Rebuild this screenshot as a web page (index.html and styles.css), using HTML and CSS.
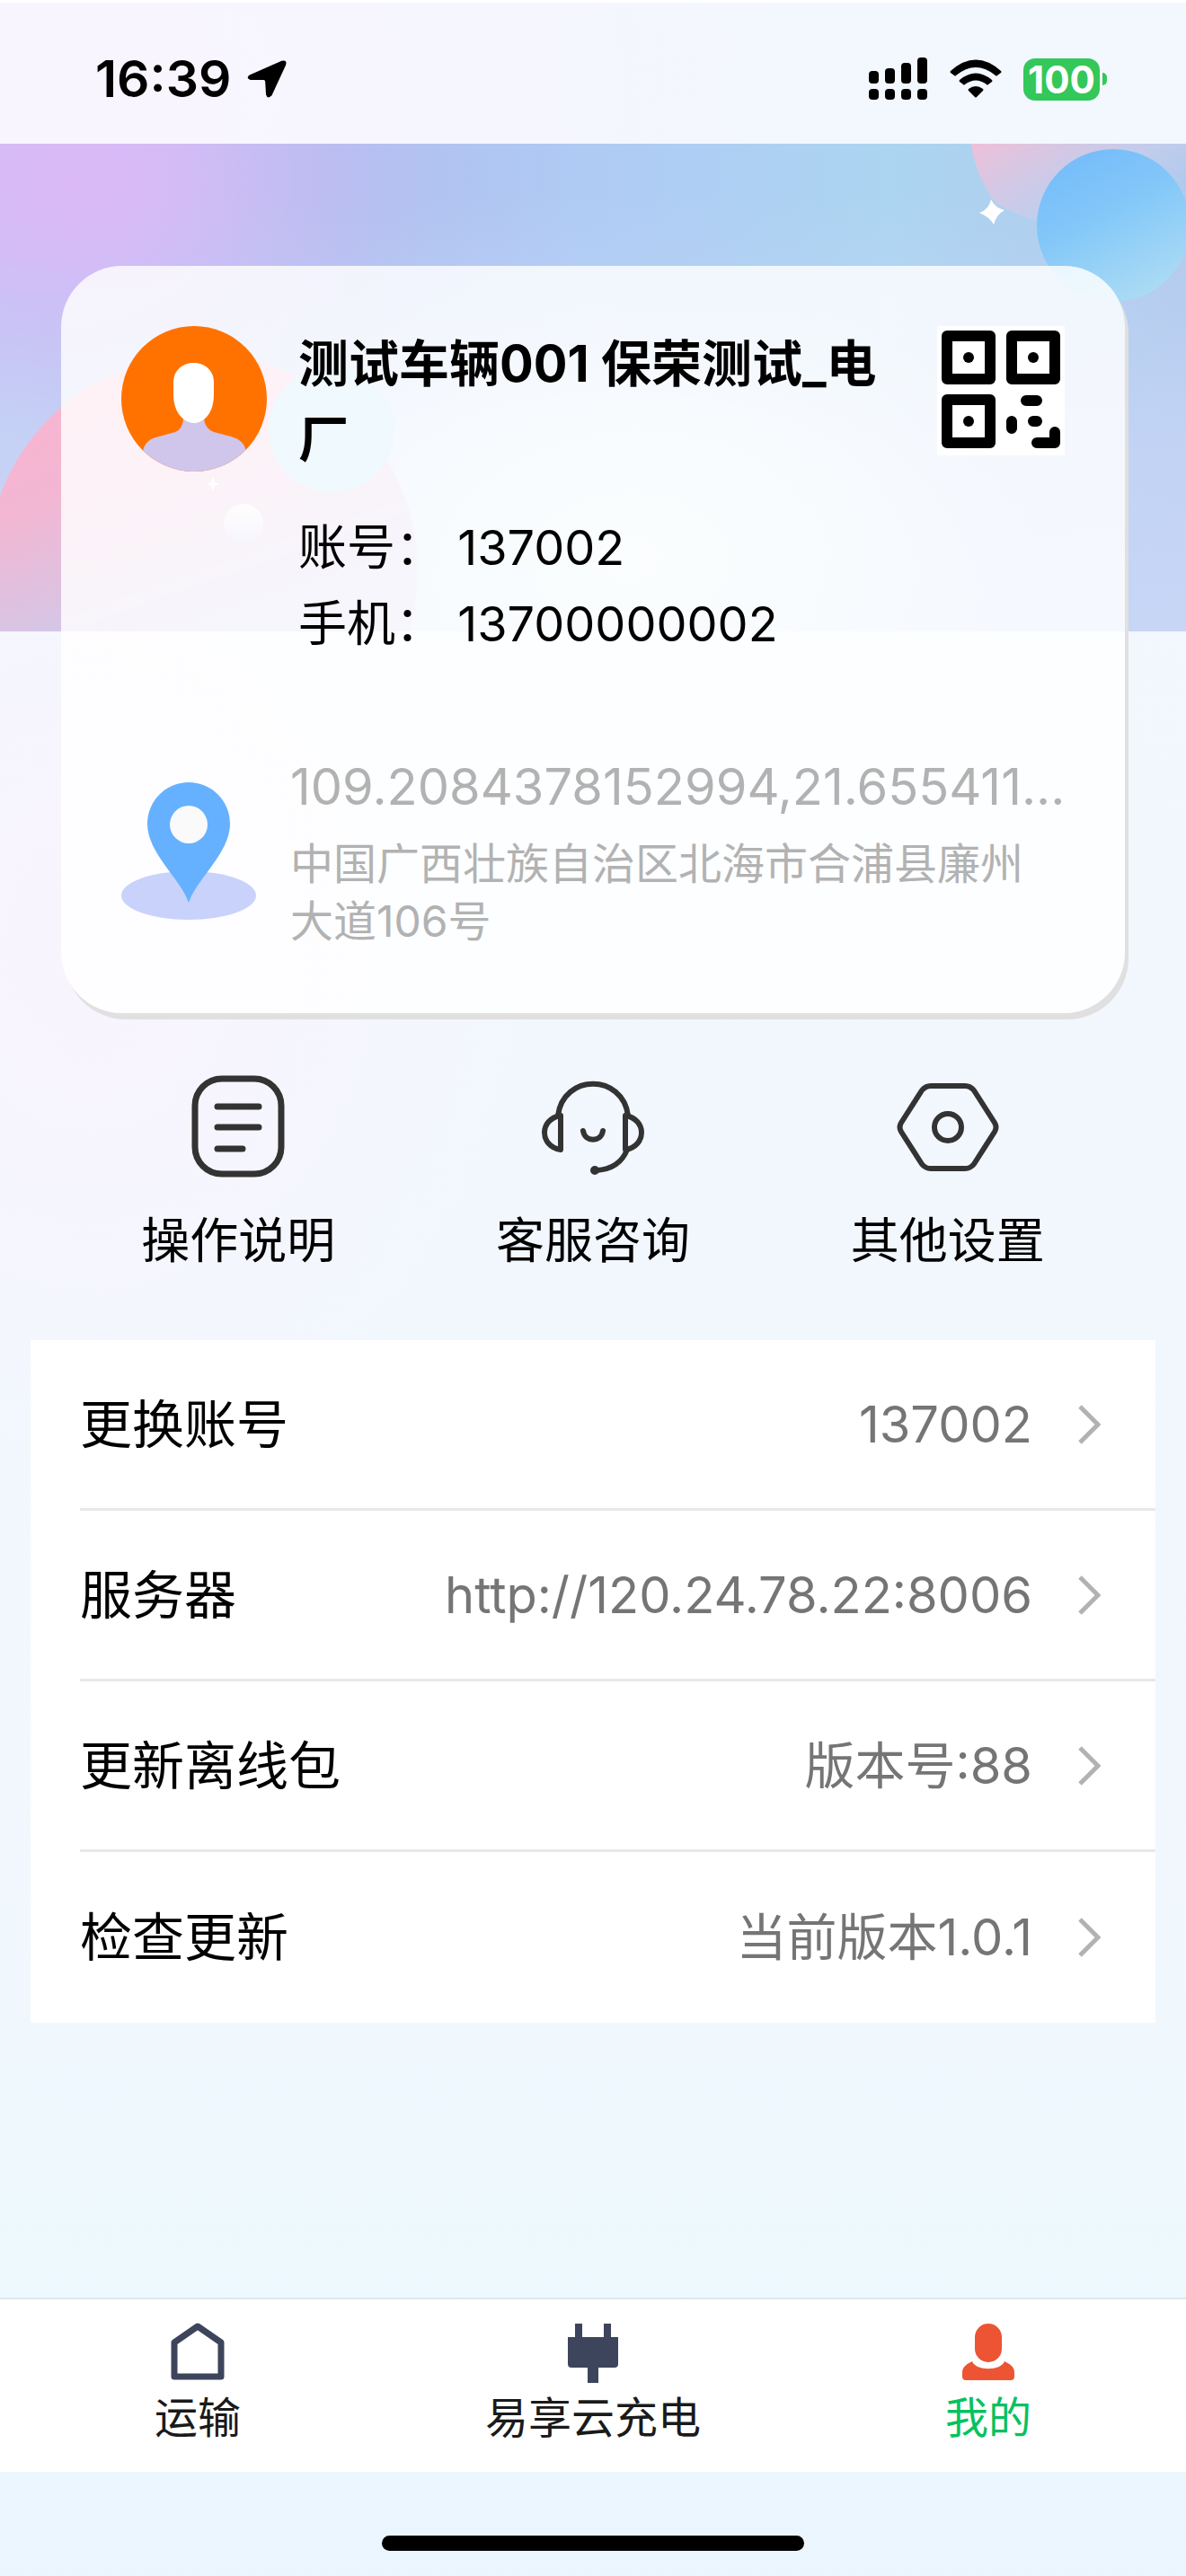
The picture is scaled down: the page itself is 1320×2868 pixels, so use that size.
FILE: index.html
```
<!DOCTYPE html>
<html lang="zh-CN">
<head>
<meta charset="utf-8"/>
<meta name="viewport" content="width=device-width, initial-scale=1"/>
<title>我的</title>
<link rel="stylesheet" href="styles.css">
</head>
<body>
<header class="status-bar">
<div class="status-left">
<span class="time">16:39</span>
<svg width="44" height="44" viewBox="0 0 48 46"><path d="M42 1 L3 18 Q-2 22 4 24 L20 24 Q22 24 22 26 L23 42 Q25 48 30 43 L47 6 Q49 -1 42 1Z"/></svg>
</div>
<div class="status-right">
<svg width="66" height="48" viewBox="0 0 66 48"><rect x="0" y="15" width="11" height="14" rx="4"/><rect x="18" y="12" width="11" height="17" rx="4"/><rect x="36" y="6" width="11" height="23" rx="4"/><rect x="54" y="0" width="11" height="29" rx="4"/><rect x="0" y="35" width="11" height="12" rx="4"/><rect x="18" y="35" width="11" height="12" rx="4"/><rect x="36" y="35" width="11" height="12" rx="4"/><rect x="54" y="35" width="11" height="12" rx="4"/></svg>
<svg width="58" height="44" viewBox="0 0 58 44"><path d="M1 13 Q29 -12 57 13 Q58 14 57 15 L53 18 Q52 19 51 18 Q29 0 7 18 Q6 19 5 18 L1 15 Q0 14 1 13Z"/><path d="M11 23 Q29 8 47 23 Q48 24 47 25 L43 28 Q42 29 41 28 Q29 19 17 28 Q16 29 15 28 L11 25 Q10 24 11 23Z"/><path d="M21 33 Q29 27 37 33 Q38 34 37 35 L30 42 Q29 43 28 42 L21 35 Q20 34 21 33Z"/></svg>
<div class="battery"><span class="battery-level">100</span><span class="battery-cap"></span></div>
</div>
</header>

<main>
<section class="profile">
<svg class="banner" viewBox="0 0 1320 543" preserveAspectRatio="none" aria-hidden="true">
<defs>
<linearGradient id="sky" x1="0" y1="0" x2="1" y2="0"><stop offset="0" stop-color="#c3c6f4"/><stop offset=".28" stop-color="#b3bef0"/><stop offset=".48" stop-color="#afcaf4"/><stop offset=".75" stop-color="#acd5f1"/><stop offset="1" stop-color="#b0c9ec"/></linearGradient>
<linearGradient id="haze" x1="0" y1="0" x2="0" y2="1"><stop offset=".1" stop-color="#c0d5f6" stop-opacity="0"/><stop offset=".6" stop-color="#c6d5f6" stop-opacity=".8"/><stop offset="1" stop-color="#c8d6f6"/></linearGradient>
<radialGradient id="violet"><stop offset="0" stop-color="#dcb9f8"/><stop offset=".3" stop-color="#d9b9f7" stop-opacity=".8"/><stop offset=".65" stop-color="#cfbbf5" stop-opacity=".4"/><stop offset="1" stop-color="#c4bdf3" stop-opacity="0"/></radialGradient>
<radialGradient id="mint"><stop offset="0" stop-color="#f0fffa" stop-opacity=".8"/><stop offset=".5" stop-color="#eafdfa" stop-opacity=".5"/><stop offset="1" stop-color="#d4e9fa" stop-opacity="0"/></radialGradient>
<linearGradient id="pink" x1="0" y1="0" x2=".35" y2="1"><stop offset="0" stop-color="#fcb3cd"/><stop offset=".35" stop-color="#f2b7d3"/><stop offset=".68" stop-color="#cfc9ea"/><stop offset="1" stop-color="#cad2f2"/></linearGradient>
<linearGradient id="wedge" x1="0" y1="0" x2="1" y2=".7"><stop offset="0" stop-color="#efbfd8"/><stop offset=".6" stop-color="#c9cdec" stop-opacity=".7"/><stop offset="1" stop-color="#b4cdf0" stop-opacity="0"/></linearGradient>
<linearGradient id="ball" x1=".2" y1="0" x2=".7" y2="1"><stop offset="0" stop-color="#74bbfa"/><stop offset=".45" stop-color="#84c8f8"/><stop offset="1" stop-color="#addcf4"/></linearGradient>
<linearGradient id="pearl" x1="0" y1="0" x2="0" y2="1"><stop offset="0" stop-color="#fff6ee"/><stop offset="1" stop-color="#cfc8f2"/></linearGradient>
</defs>
<rect width="1320" height="543" fill="url(#sky)"/>
<rect width="1320" height="543" fill="url(#haze)"/>
<ellipse cx="85" cy="40" rx="400" ry="300" fill="url(#violet)"/>
<ellipse cx="700" cy="460" rx="460" ry="320" fill="url(#mint)"/>
<circle cx="225" cy="475" r="240" fill="url(#pink)"/>
<circle cx="369" cy="318" r="70" fill="#a8defa"/>
<circle cx="271" cy="423" r="22" fill="url(#pearl)"/>
<path d="M237 371 L239 377 L244 379 L239 381 L237 387 L235 381 L230 379 L235 377Z" fill="#fff"/>
<path d="M1081 0 Q1086 36 1108 66 Q1180 110 1320 90 V0Z" fill="url(#wedge)"/>
<circle cx="1239" cy="91" r="85" fill="url(#ball)"/>
<path d="M1103 62 Q1107 71 1118 74 Q1109 79 1106 90 Q1101 81 1090 77 Q1101 73 1103 62Z" fill="#fff"/>
</svg>

<div class="card">
<div class="user">
<svg class="avatar" viewBox="0 0 163 163" role="img" aria-label="头像">
<clipPath id="round"><circle cx="81" cy="81" r="81"/></clipPath>
<g clip-path="url(#round)"><rect width="163" height="163" fill="#ff7200"/><path d="M24 163 V140 Q26 126 42 123 L60 118 Q68 115 69 104 H92 Q94 115 103 118 L122 123 Q137 127 139 140 V163Z" fill="#d0c5ea"/><path d="M58 62 C59 34 102 34 103 62 V76 C103 98 91 108 81 108 C71 108 58 98 58 76Z" fill="#fff"/></g>
</svg>
<div class="user-info">
<h1 class="user-name">测试车辆001 保荣测试_电厂</h1>
<p>账号： 137002</p>
<p>手机： 13700000002</p>
</div>
<button class="qr-button" type="button" aria-label="二维码">
<svg width="142" height="144" viewBox="0 0 142 144"><rect width="142" height="144" fill="#fff"/><g fill="none" stroke="#000" stroke-width="12" stroke-linejoin="round" stroke-linecap="round"><rect x="11" y="11" width="48" height="48"/><rect x="83" y="11" width="48" height="48"/><rect x="11" y="82" width="48" height="48"/><path d="M99 83 H111 M83 106 V114 M107 106 H111 M111 130 H131 V118"/></g><circle cx="35" cy="35" r="6"/><circle cx="107" cy="35" r="6"/><circle cx="35" cy="106" r="6"/></svg>
</button>
</div>
<div class="location">
<svg width="151" height="154" viewBox="0 0 151 154"><ellipse cx="75" cy="127" rx="75" ry="27" fill="#c8d2fb"/><path d="M75 135 C66 108 29 80 29 47 A46 46 0 0 1 121 47 C121 80 84 108 75 135Z" fill="#66b1ff"/><circle cx="75" cy="48" r="21" fill="#fafafa"/></svg>
<div class="location-text">
<p class="coords">109.2084378152994,21.655411...</p>
<p class="address">中国广西壮族自治区北海市合浦县廉州大道106号</p>
</div>
</div>
</div>
</section>

<div class="shortcuts">
<button class="shortcut" type="button">
<svg width="120" height="120" viewBox="0 0 120 120"><rect x="12" y="7" width="96" height="106" rx="30"/><path d="M37 38 H83 M37 61 H83 M37 85 H65"/></svg>
<span>操作说明</span>
</button>
<button class="shortcut" type="button">
<svg class="thin" width="120" height="120" viewBox="0 0 120 120"><path d="M21 48 C27 1 93 1 99 48"/><path d="M24 48 C0 52 0 82 24 86Z M96 48 C120 52 120 82 96 86Z"/><path d="M49 65 C51 78 69 78 71 65"/><path d="M98 86 C92 101 80 108 64 109"/><circle cx="62" cy="109" r="2"/></svg>
<span>客服咨询</span>
</button>
<button class="shortcut" type="button">
<svg class="thin" width="120" height="120" viewBox="0 0 120 120"><path d="M41 15 H79 Q85 15 89 20 L112 56 Q115 61 112 66 L89 102 Q85 107 79 107 H41 Q35 107 31 102 L8 66 Q5 61 8 56 L31 20 Q35 15 41 15Z"/><circle cx="60" cy="61" r="15"/></svg>
<span>其他设置</span>
</button>
</div>

<div class="list">
<a class="row" href="#account"><span>更换账号</span><span class="value">137002</span><svg class="chevron" viewBox="0 0 26 46"><path d="M3 3 L23 23 L3 43"/></svg></a>
<a class="row" href="#server"><span>服务器</span><span class="value">http://120.24.78.22:8006</span><svg class="chevron" viewBox="0 0 26 46"><path d="M3 3 L23 23 L3 43"/></svg></a>
<a class="row" href="#offline"><span>更新离线包</span><span class="value">版本号:88</span><svg class="chevron" viewBox="0 0 26 46"><path d="M3 3 L23 23 L3 43"/></svg></a>
<a class="row" href="#update"><span>检查更新</span><span class="value">当前版本1.0.1</span><svg class="chevron" viewBox="0 0 26 46"><path d="M3 3 L23 23 L3 43"/></svg></a>
</div>
</main>

<nav class="tabbar">
<a class="tab" href="#transport">
<svg width="68" height="68" viewBox="0 0 68 68"><path d="M8 61 V23 L34 5 L60 23 V61Z" fill="none" stroke="#3d455c" stroke-width="7" stroke-linejoin="round"/></svg>
<span>运输</span>
</a>
<a class="tab" href="#charge">
<svg width="68" height="68" viewBox="0 0 68 68"><path d="M14 2 H22 V17 H46 V2 H54 V17 H62 V47 Q62 51 58 51 H40 V68 H28 V51 H10 Q6 51 6 47 V17 H14Z" fill="#3d455c"/></svg>
<span>易享云充电</span>
</a>
<a class="tab active" href="#mine">
<svg width="68" height="68" viewBox="0 0 68 68"><rect x="19" y="2" width="30" height="43" rx="15" fill="#ec5434"/><path d="M16 44 C20 55 48 55 52 44 Q63 49 63 56 V61 Q63 65 59 65 H9 Q5 65 5 61 V56 Q5 49 16 44Z" fill="#ec5434"/></svg>
<span>我的</span>
</a>
</nav>
<footer class="home-area"><div class="home-indicator"></div></footer>
</body>
</html>
```
FILE: styles.css
```
* { box-sizing: border-box; }
body {
  margin: 0;
  min-height: 100vh;
  display: flex;
  flex-direction: column;
  font-family: Inter, "Noto Sans CJK SC", sans-serif;
  color: #000;
  background:
    radial-gradient(ellipse 500px 600px at 100px 1050px, #f9f4fe, rgba(249,244,254,0)),
    radial-gradient(ellipse 800px 600px at 100px 100px, #f9f5fe, rgba(249,245,254,0)),
    linear-gradient(#f3f7fe, #f2f7fe 70%, #edf9fe 89%, #eaf5fe);
}
h1, p { margin: 0; }
a { color: inherit; text-decoration: none; }
button { border: none; background: none; padding: 0; font: inherit; color: inherit; cursor: pointer; }
svg { display: block; flex: none; }
main { flex: 1; }

.status-bar {
  height: 160px;
  padding: 13px 88px 0 106px;
  display: flex;
  justify-content: space-between;
  align-items: center;
  border-top: 3px solid #fff;
}
.status-left { display: flex; align-items: center; gap: 18px; }
.status-right { display: flex; align-items: center; gap: 24px; }
.time { font-size: 57px; font-weight: 600; line-height: 60px; }
.battery { display: flex; align-items: center; gap: 3px; }
.battery-level {
  width: 85px;
  height: 47px;
  line-height: 47px;
  border-radius: 13px;
  background: #34c759;
  color: #fff;
  font-size: 42px;
  font-weight: 700;
  text-align: center;
}
.battery-cap { width: 5px; height: 14px; border-radius: 0 5px 5px 0; background: #34c759; }

.profile { position: relative; padding: 136px 68px 0; }
.banner { position: absolute; top: 0; left: 0; width: 100%; height: 543px; }
.card {
  position: relative;
  padding: 67px 67px 70px;
  border-radius: 68px;
  background: rgba(255,255,255,0.82);
  box-shadow: 4px 7px 0 #e0e0e0;
}
.user { display: flex; align-items: flex-start; }
.avatar { width: 163px; height: 163px; }
.user-info { flex: 1; padding: 0 44px 0 34px; font-size: 54px; line-height: 85px; }
.user-name { font-size: 56px; font-weight: 700; line-height: 84px; margin-bottom: 36px; }
.qr-button { flex: none; }
.location { display: flex; align-items: center; margin-top: 99px; color: #b2b2b2; }
.location-text { flex: 1; min-width: 0; padding-left: 37px; }
.coords { font-size: 56px; line-height: 80px; margin-bottom: 14px; white-space: nowrap; }
.address { font-size: 48px; line-height: 64px; }

.shortcuts { display: flex; padding: 66px 68px 0; }
.shortcut {
  flex: 1;
  display: flex;
  flex-direction: column;
  align-items: center;
  gap: 28px;
  font-size: 54px;
  line-height: 80px;
}
.shortcut svg { fill: none; stroke: #333; stroke-width: 7; stroke-linecap: round; stroke-linejoin: round; }
.shortcut .thin { stroke-width: 6; }

.list { margin: 70px 34px 0; background: #fff; }
.row {
  height: 190px;
  margin-left: 55px;
  padding-right: 61px;
  display: flex;
  align-items: center;
  font-size: 58px;
  line-height: 80px;
  border-bottom: 3px solid #e8e8e8;
}
.row:last-child { border-bottom: none; }
.value { margin-left: auto; color: #757575; font-size: 56px; }
.chevron { width: 26px; height: 46px; margin-left: 50px; fill: none; stroke: #b2b2b2; stroke-width: 5; }

.tabbar {
  display: flex;
  height: 194px;
  padding-top: 25px;
  background: #fff;
  border-top: 2px solid #e2e7ea;
}
.tab {
  flex: 1;
  display: flex;
  flex-direction: column;
  align-items: center;
  gap: 4px;
  font-size: 48px;
  line-height: 70px;
  color: #1a1a1a;
}
.active { color: #07c160; }
.home-area { height: 116px; padding-top: 71px; }
.home-indicator { width: 470px; height: 17px; margin: 0 auto; border-radius: 9px; background: #000; }
```
